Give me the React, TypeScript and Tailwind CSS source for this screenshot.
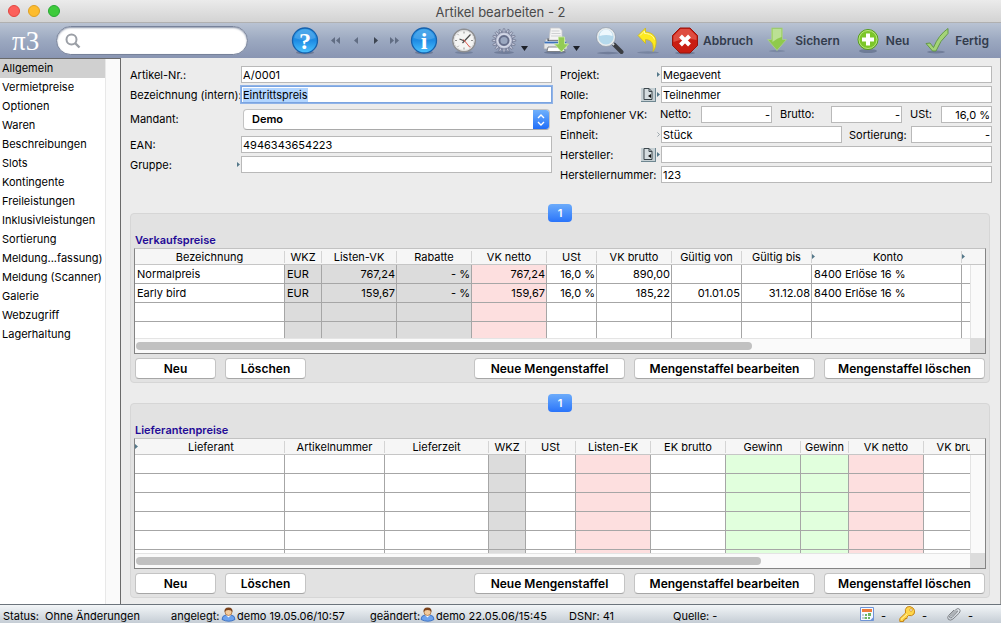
import { useEffect, useRef, type ReactNode } from "react";
import { clsx } from "clsx";

type Column = {
  title: string;
  width: string;
  tone?: "gray" | "pink" | "green";
  align?: "right";
  marker?: boolean;
};

const menu = [
  "Allgemein",
  "Vermietpreise",
  "Optionen",
  "Waren",
  "Beschreibungen",
  "Slots",
  "Kontingente",
  "Freileistungen",
  "Inklusivleistungen",
  "Sortierung",
  "Meldung...fassung)",
  "Meldung (Scanner)",
  "Galerie",
  "Webzugriff",
  "Lagerhaltung",
];

const salesColumns: Column[] = [
  { title: "Bezeichnung", width: "w-[150px]" },
  { title: "WKZ", width: "w-[37px]", tone: "gray" },
  { title: "Listen-VK", width: "w-[75px]", tone: "gray", align: "right" },
  { title: "Rabatte", width: "w-[75px]", tone: "gray", align: "right" },
  { title: "VK netto", width: "w-[75px]", tone: "pink", align: "right" },
  { title: "USt", width: "w-[50px]", align: "right" },
  { title: "VK brutto", width: "w-[75px]", align: "right" },
  { title: "Gültig von", width: "w-[70px]", align: "right" },
  { title: "Gültig bis", width: "w-[70px]", align: "right" },
  { title: "Konto", width: "w-[150px]", marker: true },
  { title: "", width: "w-[75px]", marker: true },
];

const salesRows = [
  ["Normalpreis", "EUR", "767,24", "- %", "767,24", "16,0 %", "890,00", "", "", "8400 Erlöse 16 %", ""],
  ["Early bird", "EUR", "159,67", "- %", "159,67", "16,0 %", "185,22", "01.01.05", "31.12.08", "8400 Erlöse 16 %", ""],
  [],
  [],
];

const supplierColumns: Column[] = [
  { title: "Lieferant", width: "w-[150px]", marker: true },
  { title: "Artikelnummer", width: "w-[100px]" },
  { title: "Lieferzeit", width: "w-[104px]" },
  { title: "WKZ", width: "w-[37px]", tone: "gray" },
  { title: "USt", width: "w-[50px]" },
  { title: "Listen-EK", width: "w-[75px]", tone: "pink" },
  { title: "EK brutto", width: "w-[75px]" },
  { title: "Gewinn", width: "w-[75px]", tone: "green" },
  { title: "Gewinn", width: "w-[48px]", tone: "green" },
  { title: "VK netto", width: "w-[75px]", tone: "pink" },
  { title: "VK brutto", width: "w-[75px]" },
];

const supplierRows: string[][] = [[], [], [], [], [], []];

function Marker({ open }: { open?: boolean }) {
  return (
    <svg className="h-[5px] w-[3px] shrink-0" viewBox="0 0 3 5">
      {open ? (
        <path d="M.4 .4 2.5 2.5 .4 4.6" fill="none" stroke="#7b8a94" strokeWidth=".7" />
      ) : (
        <path d="M0 0 3 2.5 0 5Z" fill="#54788a" />
      )}
    </svg>
  );
}

function BallIcon({ letter }: { letter: string }) {
  return (
    <svg className="size-7" viewBox="0 0 28 28">
      <defs>
        <linearGradient id="blueBall" x1="0" y1="0" x2="0" y2="1">
          <stop offset="0" stopColor="#2f9be8" />
          <stop offset=".5" stopColor="#1e8ce4" />
          <stop offset="1" stopColor="#4cc3ff" />
        </linearGradient>
      </defs>
      <ellipse cx="14" cy="25.5" rx="9" ry="1.8" fill="#4d5c78" opacity=".5" />
      <circle cx="14" cy="13.5" r="12.5" fill="url(#blueBall)" stroke="#1561ad" strokeWidth="1.3" />
      <path d="M3.5 11a10.7 10.7 0 0 1 21 0q-10 4-21 0Z" fill="#fff" opacity=".15" />
      <text
        x="14"
        y="21.5"
        textAnchor="middle"
        fontSize="24"
        fontWeight="700"
        fill="#fff"
        className="font-['Liberation_Serif',serif]"
      >
        {letter}
      </text>
    </svg>
  );
}

function NavIcon({ double, back, dark }: { double?: boolean; back?: boolean; dark?: boolean }) {
  return (
    <svg className={clsx("h-[7px] w-[9px]", back && "rotate-180")} viewBox="0 0 9 7">
      <path
        d={double ? "M0 0 4 3.5 0 7ZM5 0 9 3.5 5 7Z" : "M3 0 7 3.5 3 7Z"}
        fill={dark ? "#3d4551" : "#616d83"}
      />
    </svg>
  );
}

function ClockIcon() {
  return (
    <svg className="size-7" viewBox="0 0 28 28">
      <ellipse cx="14" cy="25.5" rx="9" ry="1.5" fill="#4d5c78" opacity=".4" />
      <circle cx="14" cy="13.5" r="11.3" fill="#f5f5f4" stroke="#8e8f92" strokeWidth="1.5" />
      <circle cx="14" cy="13.5" r="10" fill="none" stroke="#dcdcdc" />
      <path
        d="M14 4.5v2M14 20.500v2M5 13.5h2M21 13.5h2M7.700 7.200l1 1M19.300 18.800l1 1M7.700 19.800l1-1"
        stroke="#777"
        strokeWidth=".8"
      />
      <path d="M12.5 16 20.5 7.5M9.5 12l5 2" stroke="#4a4a4a" strokeWidth="1.2" />
      <path d="M13.5 12.5 20 20.500" stroke="#e05a50" />
    </svg>
  );
}

function GearIcon() {
  const teeth = Array.from({ length: 16 }, (_, i) => i * 22.5);
  return (
    <svg className="size-7" viewBox="0 0 28 28">
      <ellipse cx="14" cy="25.5" rx="10" ry="1.5" fill="#4d5c78" opacity=".45" />
      {teeth.map((deg) => (
        <path
          key={deg}
          d="M12.6 5.500 13.300 1.700h1.400l.7 3.800Z"
          fill="#c3c8da"
          stroke="#6d748c"
          strokeWidth=".7"
          transform={`rotate(${deg} 14 13.5)`}
        />
      ))}
      <circle cx="14" cy="13.5" r="8.500" fill="#bcc2d6" stroke="#737a93" strokeWidth=".8" />
      <circle cx="14" cy="13.5" r="6.500" fill="none" stroke="#dfe2ee" />
      <circle cx="14" cy="13.5" r="4.500" fill="#9aa7c0" stroke="#666e8a" strokeWidth="1.8" />
    </svg>
  );
}

function PrinterIcon() {
  return (
    <svg className="size-7" viewBox="0 0 28 28">
      <ellipse cx="13" cy="25.5" rx="11" ry="1.5" fill="#4d5c78" opacity=".5" />
      <path d="M4 12h19l2 4v6H2v-6Z" fill="#e4e6e8" stroke="#a6aab0" strokeWidth=".8" />
      <path d="M5.500 11.500h16v2.500h-16Z" fill="#4a4f57" />
      <path d="M8.500 1h9l2.500 2.500v9.500H7Z" fill="#f4f4f4" stroke="#c6c8ca" strokeWidth=".8" />
      <path d="M9.500 4h8M9.500 6.500h9M9 9h10" stroke="#cfd1d3" />
      <path d="M2.500 15.500h22" stroke="#3e74bd" strokeWidth="1.800" />
      <path d="M6 20h16l1 4.500H5Z" fill="#fff" stroke="#6c7075" strokeWidth=".8" />
      <path d="M16.500 10h6v7h4l-7 8-7-8h4Z" fill="#93cc54" stroke="#c6e8a0" strokeWidth=".9" />
    </svg>
  );
}

function SearchGlassIcon() {
  return (
    <svg className="size-7" viewBox="0 0 28 28">
      <ellipse cx="12" cy="26" rx="11" ry="1.2" fill="#4d5c78" opacity=".45" />
      <path d="M18 17.500 25.500 25" stroke="#3a3d42" strokeWidth="4" strokeLinecap="round" />
      <path d="M15.500 15.500 18 18" stroke="#dadfe2" strokeWidth="2" />
      <circle cx="10" cy="10" r="8.500" fill="#b5d9ec" stroke="#e8ecee" strokeWidth="1.8" />
      <circle cx="10" cy="10" r="9.500" fill="none" stroke="#89949e" strokeWidth=".6" />
      <path d="M3.500 9a6.500 6.500 0 0 1 13 0q-6-2-13 0Z" fill="#eef8fd" />
    </svg>
  );
}

function UndoIcon() {
  return (
    <svg className="size-7" viewBox="0 0 28 28">
      <ellipse cx="14" cy="25.5" rx="11" ry="1.2" fill="#4d5c78" opacity=".35" />
      <path
        d="M4 8.500 11.500 1v4c7.500.5 11.500 5 10.500 12-.4 3-1.500 6-3 7.500C20 17 18 13 11.500 12.500v4Z"
        fill="#fdea1e"
        stroke="#cdb91c"
        strokeWidth=".8"
      />
      <path d="M6 8.500 10.500 4v2.500c5 0 8.500 2 10 6" fill="none" stroke="#fff9a0" />
    </svg>
  );
}

function StopIcon() {
  return (
    <svg className="size-7" viewBox="0 0 28 28">
      <ellipse cx="14" cy="26" rx="10" ry="1.5" fill="#4d5c78" opacity=".5" />
      <path d="M9 1h10l7.500 7.500v10L19 26H9l-7.500-7.500v-10Z" fill="#c91d12" stroke="#97140c" />
      <path d="M9.500 2h9l7 7v4q-11-3-23 2V9Z" fill="#ee7468" opacity=".55" />
      <path d="M9.500 9 18.500 18M18.500 9 9.500 18" stroke="#fff" strokeWidth="4" />
    </svg>
  );
}

function DownIcon() {
  return (
    <svg className="size-7" viewBox="0 0 28 28">
      <ellipse cx="14" cy="24" rx="8" ry="1.2" fill="#4d5c78" opacity=".3" />
      <path d="M8.500 1h11v11.500h4L14 23.500 4.500 12.500h4Z" fill="#8fca4c" stroke="#a9c993" />
      <path d="M9.500 2h9v8q-4 1-9 5Z" fill="#c5e5a6" opacity=".8" />
    </svg>
  );
}

function PlusIcon() {
  return (
    <svg className="size-7" viewBox="0 0 28 28">
      <ellipse cx="14" cy="24" rx="9" ry="2" fill="#4d5c78" opacity=".5" />
      <circle cx="14" cy="12.500" r="10" fill="#7cc629" stroke="#559c1d" />
      <circle cx="14" cy="12.500" r="9" fill="none" stroke="#b9e67f" />
      <path d="M14 6.500v12M8 12.500h12" stroke="#fff" strokeWidth="4" />
    </svg>
  );
}

function CheckIcon() {
  return (
    <svg className="size-7" viewBox="0 0 28 28">
      <ellipse cx="13" cy="25" rx="9" ry="1.5" fill="#4d5c78" opacity=".45" />
      <path
        d="M3 16.500 7 16l3.500 4.500Q15.500 8 25 1.500v5Q17 13.500 13 24H9.500Z"
        fill="#a4d477"
        stroke="#5e9440"
        strokeWidth=".9"
      />
    </svg>
  );
}

function MenuArrow() {
  return (
    <svg className="mt-4 h-[5px] w-[7px]" viewBox="0 0 7 5">
      <path d="M0 0h7L3.500 5Z" fill="#1d2129" />
    </svg>
  );
}

function UserIcon() {
  return (
    <svg className="-mt-1 h-[15px] w-[15px]" viewBox="0 0 15 15">
      <path d="M1 12.500q0-4 4-4.500h5q4 .5 4 4.500-6 3.500-13 0Z" fill="#6ea3ee" stroke="#2c63ba" strokeWidth=".8" />
      <path d="M5 8h5l-2.500 2.500Z" fill="#fff" />
      <circle cx="7.500" cy="5" r="3.500" fill="#f4cb9c" stroke="#9b6330" strokeWidth=".7" />
      <path d="M3.500 5q-.5-4.500 4-4.500T11.500 5q-1-2-4-2t-4 2Z" fill="#7c431b" />
    </svg>
  );
}

function CalendarIcon() {
  return (
    <svg className="h-[15px] w-[14px]" viewBox="0 0 14 15">
      <path d="M.5 .5h13v13H.5Z" fill="#f5f9ff" stroke="#6f94d6" />
      <path d="M2 2h10v3H2Z" fill="#ee7d3b" />
      <path d="M2 7h2v2H2ZM2 10h2v2H2Z" fill="#c3ccd8" />
      <path d="M5 7h2v2H5ZM8 6h3v3H8ZM4.500 10H7v2H4.500ZM8 10h2v2H8Z" fill="#6cb562" />
      <path d="M10 13.500 13.500 10v3.500Z" fill="#6f94d6" />
    </svg>
  );
}

function KeyIcon() {
  return (
    <svg className="size-4" viewBox="0 0 16 16">
      <path
        d="M8 1q3-1.500 6 1t1 6q-2 2.500-5.500 1.500L8 11v1.500H6V14H4.500v1.500H.8v-3L6.500 7Q5.500 3 8 1Z"
        fill="#ffd64a"
        stroke="#c68618"
      />
      <circle cx="12" cy="4" r="1.3" fill="#fff" stroke="#c68618" strokeWidth=".7" />
      <path d="M2 13.500 8 8" stroke="#fff0a0" />
    </svg>
  );
}

function ClipIcon() {
  return (
    <svg className="size-[14px]" viewBox="0 0 14 14">
      <path
        d="M4 9.500 9.500 4q1.200-.8 1 .7L5 10.500q-2 1.300-2.500-.5 0-1 .6-1.600L9 2.500q2-1.700 3.500-.3T12.300 6L6 12q-2.500 2-4.600.5-1.500-2 .1-4L7 3"
        fill="none"
        stroke="#808489"
      />
    </svg>
  );
}

function ToolButton({
  label,
  className,
  children,
}: {
  label: string;
  className?: string;
  children: ReactNode;
}) {
  return (
    <button aria-label={label} className={clsx("flex h-7 shrink-0 items-center justify-center", className)}>
      {children}
    </button>
  );
}

function ActionButton({
  label,
  className,
  children,
}: {
  label: string;
  className?: string;
  children: ReactNode;
}) {
  return (
    <button
      className={clsx("flex h-7 shrink-0 items-center gap-1 text-xs font-semibold text-[#333c4d]", className)}
    >
      {children}
      <span>{label}</span>
    </button>
  );
}

function Toolbar() {
  return (
    <div className="flex h-[35px] items-center bg-linear-to-b from-[#b9c3d3] via-[#9ba8c0] to-[#8995b2] pr-3">
      <div className="w-14 shrink-0 pl-3 font-['Liberation_Serif',serif] text-[27px] leading-7 text-white">π3</div>
      <label className="flex h-[29px] w-48 shrink-0 items-center rounded-full border border-[#77829a] bg-white px-2 shadow-[inset_0_1px_2px_#8a94a8]">
        <svg className="size-4 shrink-0" viewBox="0 0 16 16">
          <circle cx="6.500" cy="6.500" r="5" fill="none" stroke="#9b9fa6" strokeWidth="2" />
          <path d="m10 10 4.500 4.500" stroke="#9b9fa6" strokeWidth="2.4" />
        </svg>
        <input aria-label="Suchen" className="ml-1 w-full bg-transparent text-[13px] outline-none" />
      </label>
      <div className="flex flex-1 items-center pl-[42px]">
        <ToolButton label="Hilfe" className="w-[30px]">
          <BallIcon letter="?" />
        </ToolButton>
        <ToolButton label="Erster" className="w-[30px]">
          <NavIcon double back />
        </ToolButton>
        <ToolButton label="Zurück" className="w-3">
          <NavIcon back />
        </ToolButton>
        <ToolButton label="Weiter" className="w-[26px]">
          <NavIcon dark />
        </ToolButton>
        <ToolButton label="Letzter" className="w-3">
          <NavIcon double />
        </ToolButton>
        <ToolButton label="Info" className="ml-2.5 w-7">
          <BallIcon letter="i" />
        </ToolButton>
        <ToolButton label="Verlauf" className="ml-3 w-7">
          <ClockIcon />
        </ToolButton>
        <ToolButton label="Aktionen" className="ml-3 gap-[3px]">
          <GearIcon />
          <MenuArrow />
        </ToolButton>
        <ToolButton label="Drucken" className="ml-[14px] gap-[3px]">
          <PrinterIcon />
          <MenuArrow />
        </ToolButton>
        <ToolButton label="Suchen" className="ml-4 w-7">
          <SearchGlassIcon />
        </ToolButton>
        <ToolButton label="Rückgängig" className="ml-2.5 w-7">
          <UndoIcon />
        </ToolButton>
      </div>
      <div className="flex shrink-0 items-center">
        <ActionButton label="Abbruch">
          <StopIcon />
        </ActionButton>
        <ActionButton label="Sichern" className="ml-2.5">
          <DownIcon />
        </ActionButton>
        <ActionButton label="Neu" className="ml-[14px]">
          <PlusIcon />
        </ActionButton>
        <ActionButton label="Fertig" className="ml-[14px]">
          <CheckIcon />
        </ActionButton>
      </div>
    </div>
  );
}

function TextField({
  id,
  value = "",
  className = "flex-1",
}: {
  id: string;
  value?: string;
  className?: string;
}) {
  return (
    <input
      id={id}
      defaultValue={value}
      className={clsx(
        "h-[17px] min-w-0 border border-[#b9b9b9] bg-white px-px text-[11px] leading-[15px] outline-none",
        className
      )}
    />
  );
}

function LinkButton({ label }: { label: string }) {
  return (
    <button
      aria-label={label}
      className="flex h-[14px] w-[15px] items-center justify-center border-r border-b border-[#6f8791] bg-[#c6d0d4]"
    >
      <svg className="h-3 w-2.5" viewBox="0 0 10 12">
        <path d="M1 .5h5l3 3v8H1Z" fill="#d5dde0" stroke="#3c474c" />
        <path d="M6 .5v3h3" fill="none" stroke="#3c474c" />
        <path d="M8 6v4L5 8Z" fill="#111" />
      </svg>
    </button>
  );
}

function Row({
  id,
  label,
  labelWidth,
  extra,
  children,
}: {
  id: string;
  label: string;
  labelWidth: string;
  extra?: ReactNode;
  children: ReactNode;
}) {
  return (
    <div className="flex h-5 items-start">
      <div className={clsx("flex h-[17px] shrink-0 items-center justify-between pr-px", labelWidth)}>
        <label htmlFor={id} className="pt-0.5 whitespace-nowrap">
          {label}
        </label>
        {extra && <span className="flex items-center gap-px">{extra}</span>}
      </div>
      {children}
    </div>
  );
}

function ArticleForm() {
  const nameRef = useRef<HTMLInputElement>(null);

  useEffect(() => {
    nameRef.current?.focus();
    nameRef.current?.select();
  }, []);

  return (
    <form
      className="grid grid-cols-[minmax(0,422fr)_minmax(0,432fr)] gap-x-2"
      onSubmit={(e) => e.preventDefault()}
    >
      <div>
        <Row id="artikel" label="Artikel-Nr.:" labelWidth="w-[111px]">
          <TextField id="artikel" value="A/0001" />
        </Row>
        <Row id="bezeichnung" label="Bezeichnung (intern):" labelWidth="w-[111px]">
          <input
            id="bezeichnung"
            ref={nameRef}
            defaultValue="Eintrittspreis"
            className="h-[17px] min-w-0 flex-1 border border-[#7ba4e0] bg-white px-px text-[11px] leading-[15px] ring-1 ring-[#8fb3e8] outline-none selection:bg-[#b2d5ff] selection:text-black"
          />
        </Row>
        <div className="flex h-[30px] items-start pt-[3px]">
          <label htmlFor="mandant" className="w-[113px] shrink-0 leading-[21px]">
            Mandant:
          </label>
          <div className="mr-0.5 grid h-[21px] flex-1 overflow-hidden rounded border border-[#c3c3c3] border-b-[#a9a9a9] bg-white">
            <select
              id="mandant"
              className="col-start-1 row-start-1 appearance-none bg-transparent pl-2 text-[11px] font-semibold outline-none"
            >
              <option>Demo</option>
            </select>
            <span className="pointer-events-none col-start-1 row-start-1 flex w-4 items-center justify-center justify-self-end bg-linear-to-b from-[#6fb0fb] to-[#1f6df8]">
              <svg className="h-3 w-2" viewBox="0 0 8 12">
                <path d="m1 4 3-3 3 3M1 8l3 3 3-3" fill="none" stroke="#fff" strokeWidth="1.4" />
              </svg>
            </span>
          </div>
        </div>
        <Row id="ean" label="EAN:" labelWidth="w-[111px]">
          <TextField id="ean" value="4946343654223" />
        </Row>
        <Row id="gruppe" label="Gruppe:" labelWidth="w-[111px]" extra={<Marker />}>
          <TextField id="gruppe" />
        </Row>
      </div>
      <div>
        <Row id="projekt" label="Projekt:" labelWidth="w-[101px]" extra={<Marker />}>
          <TextField id="projekt" value="Megaevent" />
        </Row>
        <Row
          id="rolle"
          label="Rolle:"
          labelWidth="w-[101px]"
          extra={
            <>
              <LinkButton label="Rolle öffnen" />
              <Marker />
            </>
          }
        >
          <TextField id="rolle" value="Teilnehmer" />
        </Row>
        <Row id="netto" label="Empfohlener VK:" labelWidth="w-[100px]">
          <div className="flex min-w-0 flex-1 items-center">
            <label htmlFor="netto" className="w-[41px] shrink-0">
              Netto:
            </label>
            <TextField id="netto" value="-" className="w-[71px] text-right" />
            <label htmlFor="brutto" className="w-[59px] shrink-0 pl-2">
              Brutto:
            </label>
            <TextField id="brutto" value="-" className="w-[71px] text-right" />
            <label htmlFor="ust" className="w-[39px] shrink-0 pl-2">
              USt:
            </label>
            <TextField id="ust" value="16,0 %" className="flex-1 text-right" />
          </div>
        </Row>
        <Row id="einheit" label="Einheit:" labelWidth="w-[101px]" extra={<Marker open />}>
          <TextField id="einheit" value="Stück" />
          <label htmlFor="sortierung" className="w-[69px] shrink-0 pl-[7px] leading-[18px]">
            Sortierung:
          </label>
          <TextField id="sortierung" value="-" className="w-[81px] text-right" />
        </Row>
        <Row
          id="hersteller"
          label="Hersteller:"
          labelWidth="w-[101px]"
          extra={
            <>
              <LinkButton label="Hersteller öffnen" />
              <Marker />
            </>
          }
        >
          <TextField id="hersteller" />
        </Row>
        <Row id="herstellernummer" label="Herstellernummer:" labelWidth="w-[101px]">
          <TextField id="herstellernummer" value="123" />
        </Row>
      </div>
    </form>
  );
}

function PushButton({ label, width }: { label: string; width: string }) {
  return (
    <button
      className={clsx(
        "h-[21px] rounded border border-[#c4c4c4] border-b-[#a6a6a6] bg-white text-xs leading-[17px] font-semibold whitespace-nowrap",
        width
      )}
    >
      {label}
    </button>
  );
}

function PriceTable({
  title,
  columns,
  rows,
  width,
  height,
  thumb,
}: {
  title: string;
  columns: Column[];
  rows: string[][];
  width: string;
  height: string;
  thumb: string;
}) {
  return (
    <section className="mr-0.5 rounded border border-[#d6d6d6] bg-[#e2e2e2] px-[3px] pb-[3px]">
      <div className="-mt-2.5 flex justify-center">
        <button className="h-[18px] w-6 rounded bg-linear-to-b from-[#6cabfa] to-[#2a74fa] text-[11px] font-semibold text-white">
          1
        </button>
      </div>
      <h2 className="mt-2.5 h-4 pl-px text-[11px] leading-4 font-semibold text-[#1f0a96]">{title}</h2>
      <div className="border border-[#848484] border-t-[#c2c2c2]">
        <div className={clsx("flex overflow-hidden", height)}>
          <div className="min-w-0 flex-1 overflow-hidden">
            <table className={clsx("min-w-full table-fixed border-separate border-spacing-0", width)}>
              <thead>
                <tr>
                  {columns.map((c, i) => (
                    <th
                      key={i}
                      className={clsx("h-4 border-b border-[#c6c6c6] bg-[#f6f6f6] p-0 font-normal", c.width)}
                    >
                      <div className="flex h-3 items-center border-r border-[#d4d4d4] leading-3">
                        {c.marker && <Marker />}
                        <span className="flex-1 whitespace-nowrap">{c.title}</span>
                      </div>
                    </th>
                  ))}
                </tr>
              </thead>
              <tbody>
                {rows.map((row, r) => (
                  <tr key={r}>
                    {columns.map((c, i) => (
                      <td
                        key={i}
                        className={clsx(
                          "h-[19px] border-r border-b border-[#a6a6a6] py-0 pl-0.5 leading-4 whitespace-nowrap",
                          c.align === "right" && "pr-px text-right",
                          !c.tone && "bg-white",
                          c.tone === "gray" && "bg-[#dcdcdc]",
                          c.tone === "pink" && "bg-[#fddfdf]",
                          c.tone === "green" && "bg-[#e1ffdd]"
                        )}
                      >
                        {row[i]}
                      </td>
                    ))}
                  </tr>
                ))}
              </tbody>
            </table>
          </div>
          <div className="flex w-[15px] shrink-0 flex-col">
            <div className="h-4 border-b border-[#c6c6c6] bg-[#f6f6f6]" />
            <div className="flex-1 border-l border-[#e4e4e4] bg-[#fafafa]" />
          </div>
        </div>
        <div className="flex h-[15px]">
          <div className="flex flex-1 items-center border-t border-[#e4e4e4] bg-[#fafafa] px-px">
            <div className={clsx("h-2 rounded-full bg-[#c1c1c1]", thumb)} />
          </div>
          <div className="w-[15px] bg-[#dcdcdc]" />
        </div>
      </div>
      <div className="mt-1 flex justify-between px-px">
        <div className="flex gap-[9px]">
          <PushButton label="Neu" width="w-[81px]" />
          <PushButton label="Löschen" width="w-[81px]" />
        </div>
        <div className="flex gap-[9px]">
          <PushButton label="Neue Mengenstaffel" width="w-[151px]" />
          <PushButton label="Mengenstaffel bearbeiten" width="w-[181px]" />
          <PushButton label="Mengenstaffel löschen" width="w-[161px]" />
        </div>
      </div>
    </section>
  );
}

function StatusBar() {
  return (
    <footer className="flex h-[19px] items-center border-t border-[#6c747c] bg-linear-to-b from-[#f3f6f8] to-[#c5cdd5] pt-1 pl-[3px] whitespace-nowrap">
      <span className="w-[42px]">Status:</span>
      <span className="w-[126px]">Ohne Änderungen</span>
      <span className="flex w-[199px] items-center">
        <span className="w-[50px]">angelegt:</span>
        <UserIcon />
        <span className="pl-px">demo 19.05.06/10:57</span>
      </span>
      <span className="flex w-[199px] items-center">
        <span className="w-[50px]">geändert:</span>
        <UserIcon />
        <span className="pl-px">demo 22.05.06/15:45</span>
      </span>
      <span className="w-[104px]">DSNr: 41</span>
      <span>Quelle: -</span>
      <span className="ml-auto flex items-center pr-7 pb-1">
        <CalendarIcon />
        <span className="w-[25px] pt-1 pl-[7px]">-</span>
        <KeyIcon />
        <span className="w-8 pt-1 pl-[7px]">-</span>
        <ClipIcon />
        <span className="pt-1 pl-[7px]">-</span>
      </span>
    </footer>
  );
}

export default function App() {
  return (
    <div className="flex min-h-screen flex-col bg-[#ececec] font-['Inter',sans-serif] text-[11px] leading-[15px] text-black">
      <header className="flex h-[23px] items-center border-b border-[#b0b0b0] bg-linear-to-b from-[#ebebeb] to-[#d3d3d3] px-2">
        <div className="flex flex-1 gap-2">
          <button aria-label="Schließen" className="size-3 rounded-full border border-[#e2463f] bg-[#fc605b]" />
          <button aria-label="Minimieren" className="size-3 rounded-full border border-[#dfa023] bg-[#fdbc2e]" />
          <button aria-label="Maximieren" className="size-3 rounded-full border border-[#27a833] bg-[#3ecb3c]" />
        </div>
        <h1 className="pt-0.5 text-[13px] text-[#4a4a4a]">Artikel bearbeiten - 2</h1>
        <div className="flex-1" />
      </header>
      <Toolbar />
      <div className="flex flex-1">
        <nav className="flex w-[121px] shrink-0 border-t border-r border-[#6a6a6a] bg-white">
          <ul className="w-[105px]">
            {menu.map((item, i) => (
              <li key={item}>
                <a
                  href="#"
                  className={clsx(
                    "block h-[19px] pl-0.5 leading-[19px] whitespace-nowrap",
                    i === 0 && "bg-[#d0d0d0]"
                  )}
                >
                  {item}
                </a>
              </li>
            ))}
          </ul>
          <div className="flex-1 border-l border-[#e8e8e8] bg-[#fafafa]" />
        </nav>
        <main className="flex min-w-0 flex-1 flex-col gap-5 border-r border-[#a0a0a0] pt-2 pr-2 pb-1.5 pl-[9px]">
          <div className="mb-[7px]">
            <ArticleForm />
          </div>
          <PriceTable
            title="Verkaufspreise"
            columns={salesColumns}
            rows={salesRows}
            width="w-[902px]"
            height="h-[89px]"
            thumb="w-[74%]"
          />
          <PriceTable
            title="Lieferantenpreise"
            columns={supplierColumns}
            rows={supplierRows}
            width="w-[864px]"
            height="h-[114px]"
            thumb="w-[75%]"
          />
        </main>
      </div>
      <StatusBar />
    </div>
  );
}
